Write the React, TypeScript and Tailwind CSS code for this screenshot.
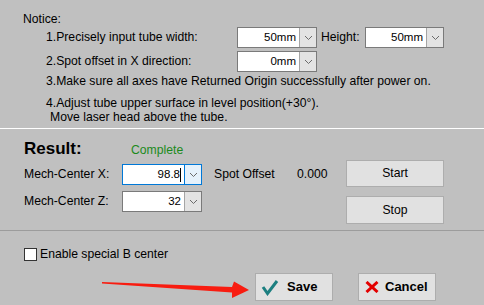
import React from 'react';

function Chevron({ color = '#6b6b6b' }: { color?: string }) {
  return (
    <svg width="9" height="6" viewBox="0 0 9 6">
      <path d="M1 1 L4.5 4.5 L8 1" fill="none" stroke={color} strokeWidth="1" />
    </svg>
  );
}

function Combo({ value, w, focused = false }: { value: string; w: string; focused?: boolean }) {
  return (
    <div
      className={`flex h-[21px] ${w} border bg-white ${focused ? 'border-[#0078d7]' : 'border-[#7a7a7a]'}`}
    >
      <div className="flex flex-1 items-center justify-end pr-[3px] text-[11.5px] text-black">
        {value}
        {focused && <span className="inline-block h-[14px] w-px bg-black" />}
      </div>
      <div
        className={`flex w-[17px] items-center justify-center border-l ${
          focused ? 'border-[#0078d7] bg-[#e5f1fb]' : 'border-[#a5a5a5] bg-[#e3e3e3]'
        }`}
      >
        <Chevron />
      </div>
    </div>
  );
}

export default function App() {
  return (
    <div
      className="relative h-[305px] w-[484px] overflow-hidden bg-[#c0c0c0] text-[12.2px] text-black"
      style={{ fontFamily: '"Liberation Sans", Arial, sans-serif' }}
    >
      {/* notice block */}
      <div className="h-[128px] pl-[23px] pt-[11px]">
        <div className="h-[16px] leading-[16px]">Notice:</div>
        <div className="flex h-[21px] items-center pl-[23px]">
          <div className="w-[191px]">1.Precisely input tube width:</div>
          <Combo value="50mm" w="w-[80px]" />
          <div className="ml-[4px] w-[44px]">Height:</div>
          <Combo value="50mm" w="w-[79px]" />
        </div>
        <div className="mt-[3px] flex h-[21px] items-center pl-[23px]">
          <div className="w-[191px]">2.Spot offset in X direction:</div>
          <Combo value="0mm" w="w-[80px]" />
        </div>
        <div className="mt-[1px] h-[16px] pl-[23px] leading-[16px]">
          3.Make sure all axes have Returned Origin successfully after power on.
        </div>
        <div className="mt-[7px] h-[14px] pl-[23px] leading-[14px]">
          4.Adjust tube upper surface in level position(+30°).
        </div>
        <div className="h-[14px] pl-[27px] leading-[14px]">Move laser head above the tube.</div>
      </div>
      <div className="h-px bg-white" />

      {/* result block */}
      <div className="h-[101px] pl-[24px] pt-[10px]">
        <div className="flex h-[20px] items-baseline">
          <div className="w-[107px] text-[17px] font-bold leading-[20px]">Result:</div>
          <div className="text-[#1b8a1b]">Complete</div>
        </div>
        <div className="flex">
          <div className="flex flex-col">
            <div className="mt-[5px] flex h-[21px] items-center">
              <div className="w-[98px]">Mech-Center X:</div>
              <Combo value="98.8" w="w-[80px]" focused />
            </div>
            <div className="mt-[6px] flex h-[21px] items-center">
              <div className="w-[98px]">Mech-Center Z:</div>
              <Combo value="32" w="w-[80px]" />
            </div>
          </div>
          <div className="ml-[12px] mt-[5px] flex h-[21px] w-[132px] items-center">
            <div className="w-[83px]">Spot Offset</div>
            <div>0.000</div>
          </div>
          <div className="flex flex-col">
            <button className="mt-px flex h-[27px] w-[98px] items-center justify-center border border-[#adadad] bg-[#e1e1e1]">
              Start
            </button>
            <button className="mt-[9px] flex h-[28px] w-[98px] items-center justify-center border border-[#adadad] bg-[#e1e1e1]">
              Stop
            </button>
          </div>
        </div>
      </div>
      <div className="h-px bg-[#9c9c9c]" />

      {/* footer */}
      <div className="pl-[24px] pt-[17px]">
        <label className="flex h-[13px] items-center">
          <span className="h-[13px] w-[13px] border border-[#333333] bg-white" />
          <span className="ml-[3px]">Enable special B center</span>
        </label>
        <div className="mt-[12px] flex pl-[231px]">
          <button className="flex h-[28px] w-[78px] items-center border border-[#adadad] bg-[#e1e1e1] pl-[5px] text-[13px] font-bold">
            <svg width="18" height="17" viewBox="0 0 18 17">
              <path d="M2 8 L6.5 14.5 L16 2" fill="none" stroke="#1c7f80" strokeWidth="3" strokeLinejoin="miter" />
            </svg>
            <span className="ml-[8px]">Save</span>
          </button>
          <button className="ml-[25px] flex h-[28px] w-[78px] items-center border border-[#adadad] bg-[#e1e1e1] pl-[6px] text-[13px] font-bold">
            <svg width="14" height="12" viewBox="0 0 14 12">
              <path d="M1.5 1 L12.5 11 M12.5 1 L1.5 11" fill="none" stroke="#e30000" strokeWidth="3" />
            </svg>
            <span className="ml-[6px]">Cancel</span>
          </button>
        </div>
      </div>

      {/* annotation arrow */}
      <svg className="absolute left-0 top-0" width="484" height="305" viewBox="0 0 484 305">
        <polygon
          points="102,282 232,287 234,281.5 249,290 232,298 232,292.5 102,283.5"
          fill="#f81c10"
        />
      </svg>
    </div>
  );
}
